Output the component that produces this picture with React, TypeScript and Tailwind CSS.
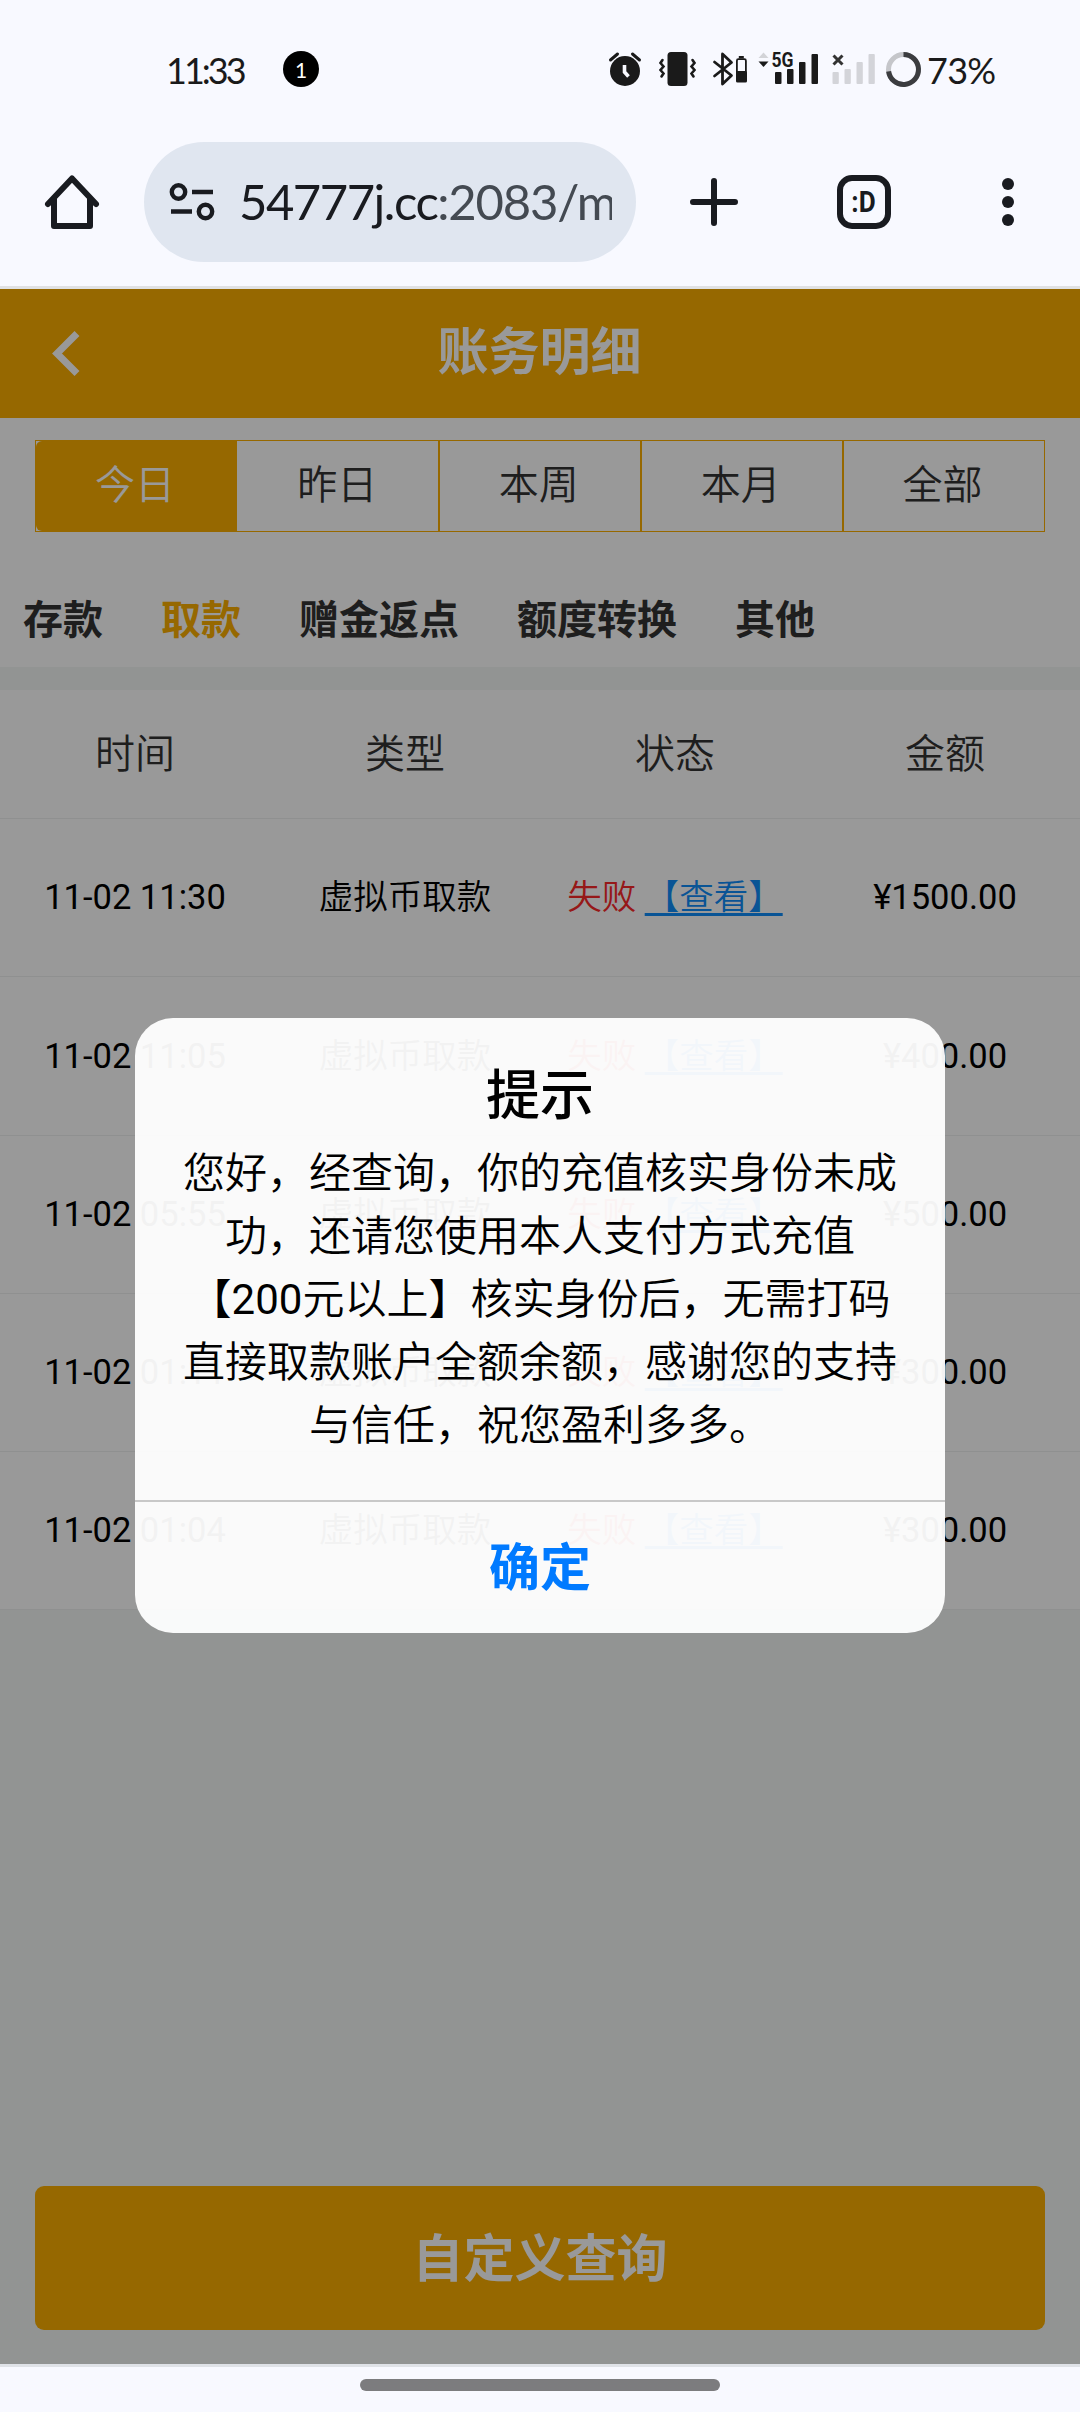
import type { ReactNode } from "react";

const ranges = ["今日", "昨日", "本周", "本月", "全部"];
const categories = ["存款", "取款", "赠金返点", "额度转换", "其他"];
const columns = ["时间", "类型", "状态", "金额"];

const records = [
    { time: "11-02 11:30", amount: "¥1500.00" },
    { time: "11-02 11:05", amount: "¥400.00" },
    { time: "11-02 05:55", amount: "¥500.00" },
    { time: "11-02 01:11", amount: "¥300.00" },
    { time: "11-02 01:04", amount: "¥300.00" },
];

function StatusBar() {
    return (
        <div className="flex h-[102px] shrink-0 items-start pt-[50px] text-[#1a1a1a] font-['Lato','Roboto',sans-serif]">
            <span className="ml-[166px] w-[117px] text-[36px] leading-[40px] tracking-[-3px]">11:33</span>
            <span className="mt-px flex h-9 w-9 items-center justify-center rounded-full bg-black text-[21px] leading-none text-white">1</span>

            {/* Alarm */}
            <svg className="ml-[288px]" width="36" height="40" viewBox="607 50 36 40" fill="none">
                <circle cx="625" cy="71" r="15" fill="#1a1a1a" />
                <path d="M610.500 60l7-6M639.500 60l-7-6" stroke="#1a1a1a" strokeWidth="3" strokeLinecap="round" />
                <path d="M624.500 65v7l4 4.500" stroke="#f8f9ff" strokeWidth="3.600" />
            </svg>
            {/* Vibrate */}
            <svg className="ml-[14px]" width="40" height="40" viewBox="657 50 40 40" fill="none">
                <rect x="667.500" y="52" width="20" height="34" rx="3.500" fill="#1a1a1a" />
                <path d="M662.500 60l-2 3 3 3.500-3 3.500 3 3.500-2 3M692.500 60l2 3-3 3.500 3 3.500-3 3.500 2 3" stroke="#1a1a1a" strokeWidth="2.600" strokeLinecap="round" />
            </svg>
            {/* Bluetooth with battery level */}
            <svg className="ml-[14px]" width="38" height="40" viewBox="711 50 38 40" fill="none">
                <path d="M714.500 62l17 13.500-9 8.500V54l9 8.500-17 13.500" stroke="#1a1a1a" strokeWidth="2.800" strokeLinejoin="round" strokeLinecap="round" />
                <rect x="736.900" y="59.200" width="9" height="22" rx="1.500" stroke="#1a1a1a" strokeWidth="1.800" />
                <rect x="736" y="71" width="11" height="11.500" rx="1.500" fill="#1a1a1a" />
                <rect x="738.800" y="56" width="5" height="2.500" fill="#1a1a1a" />
            </svg>
            {/* 5G signal */}
            <svg className="-mt-2 ml-2" width="64" height="48" viewBox="757 42 64 48">
                <path d="M763.500 52.500l5 5.500h-10z" fill="#d3d4d8" />
                <path d="M763.500 67l5-5.500h-10z" fill="#1a1a1a" />
                <g fill="#1a1a1a">
                    <rect x="775" y="72" width="6.500" height="12" rx="1" />
                    <rect x="787" y="69" width="6.500" height="15" rx="1" />
                    <rect x="799" y="62" width="6.500" height="22" rx="1" />
                    <rect x="811.500" y="54" width="6.500" height="30" rx="1" />
                    <text x="771.500" y="67" fontSize="20" fontWeight="700" fontFamily="Roboto, sans-serif" textLength="22" lengthAdjust="spacingAndGlyphs">5G</text>
                </g>
            </svg>
            {/* Second SIM, no service */}
            <svg className="ml-[10px]" width="46" height="40" viewBox="831 50 46 40">
                <path d="M833.500 55.500l9 9M842.500 55.500l-9 9" stroke="#333" strokeWidth="3" />
                <g fill="#d3d4d9">
                    <rect x="832.500" y="72" width="6.300" height="12" rx="1" />
                    <rect x="844.500" y="69" width="6.300" height="15" rx="1" />
                    <rect x="856.500" y="62" width="6.300" height="22" rx="1" />
                    <rect x="868.500" y="54" width="6.300" height="30" rx="1" />
                </g>
            </svg>
            {/* Battery ring */}
            <svg className="ml-2" width="38" height="40" viewBox="885 50 38 40" fill="none" strokeWidth="5">
                <circle cx="903.500" cy="69.500" r="15" stroke="#c5c6ca" />
                <path d="M903.500 54.500a15 15 0 1 1-14.880 16.900" stroke="#3b3c3f" />
            </svg>
            <span className="ml-1 text-[36px] leading-[40px] tracking-[-0.7px]">73%</span>
        </div>
    );
}

function BrowserBar() {
    return (
        <div className="flex h-[187px] shrink-0 items-start border-b-[3px] border-[#e0e1e3] pt-10 text-[#191b20]">
            <svg className="ml-[42px] mt-[30px]" width="60" height="60" viewBox="42 172 60 60" fill="none">
                <path d="M48 204L72 178.500L96 204" stroke="currentColor" strokeWidth="6" strokeLinecap="round" strokeLinejoin="round" />
                <path d="M54 198V226H90V198" stroke="currentColor" strokeWidth="6" strokeLinejoin="round" />
            </svg>
            <div className="ml-[42px] flex h-[120px] w-[492px] items-center rounded-full bg-[#e0e6f0] pl-[24px] font-['Lato','Roboto',sans-serif]">
                <svg width="50" height="44" viewBox="168 180 50 44" fill="none" stroke="currentColor" strokeWidth="4.400">
                    <circle cx="178.500" cy="192" r="6.700" />
                    <path d="M192 192h21M171 211.500h21" />
                    <circle cx="205.500" cy="211.500" r="6.700" />
                </svg>
                <div className="-mt-0.5 ml-[21px] w-[373px] overflow-hidden whitespace-nowrap text-[49px] leading-[70px] tracking-[-1.5px]">
                    54777j.cc<span className="tracking-[-1.200px] text-[#444a52]">:2083/m</span>
                </div>
            </div>
            <svg className="ml-[52px] mt-[34px]" width="52" height="52" viewBox="688 176 52 52">
                <path d="M714 181v42M693 202h42" stroke="currentColor" strokeWidth="6" strokeLinecap="round" />
            </svg>
            <div className="ml-[97px] mt-[33px] flex h-[54px] w-[54px] items-center justify-center rounded-[15px] border-[6px] border-[#191b20] text-[29px] font-bold leading-none font-['Roboto',sans-serif]">
                <span className="inline-block scale-x-[.9]">:D</span>
            </div>
            <div className="ml-[111px] mt-9 flex flex-col gap-1.5">
                <i className="h-3 w-3 rounded-full bg-[#191b20]" />
                <i className="h-3 w-3 rounded-full bg-[#191b20]" />
                <i className="h-3 w-3 rounded-full bg-[#191b20]" />
            </div>
        </div>
    );
}

function Cell({ children }: { children: ReactNode }) {
    return <div className="flex w-1/4 items-center justify-center whitespace-pre">{children}</div>;
}

function Ledger() {
    return (
        <>
            <header className="flex h-[129px] items-center bg-[#faad00] text-white">
                <svg className="ml-[50px] w-[32px]" width="32" height="50" viewBox="0 0 32 50" fill="none">
                    <path d="M27 4.500L7 24.500L27 44.500" stroke="currentColor" strokeWidth="7" />
                </svg>
                <h1 className="flex-1 pr-[83px] text-center text-[51px] font-bold">账务明细</h1>
            </header>

            <div className="bg-white pt-[22px]">
                <div className="mx-[35px] flex h-[92px] border border-[#faad00] text-[40px] font-[350] text-[#333]">
                    {ranges.map((label, i) => (
                        <div
                            key={label}
                            className={
                                i === 0
                                    ? "flex w-[201.200px] items-center justify-center rounded-l-[6px] bg-[#faad00] pr-[3px] text-white"
                                    : i === 1
                                        ? "flex w-[201.200px] items-center justify-center pr-px"
                                        : "flex flex-1 items-center justify-center border-l-2 border-[#faad00] pr-[3px]"
                            }
                        >
                            {label}
                        </div>
                    ))}
                </div>
                <div className="flex h-[135px] gap-[58px] pl-[23px] pt-[60px] text-[40px] font-bold leading-[58px] text-[#333]">
                    {categories.map((label, i) => (
                        <span key={label} className={i === 1 ? "text-[#faad00]" : ""}>
                            {label}
                        </span>
                    ))}
                </div>
            </div>

            <div className="mt-[23px] bg-white">
                <div className="flex h-[129px] border-b border-[#eff1f0] pt-[2px] text-[40px] font-[350] text-[#333]">
                    {columns.map((label) => (
                        <Cell key={label}>{label}</Cell>
                    ))}
                </div>
                {records.map((row) => (
                    <div key={row.time} className="flex h-[158.300px] border-b border-[#eff1f0] pt-px text-[34.500px] text-black">
                        <Cell>{row.time}</Cell>
                        <Cell><span className="font-[350]">虚拟币取款</span></Cell>
                        <Cell>
                            <span className="font-[350] text-[#fa2828]">失败 </span>
                            <a className="font-[350] text-[#108cf8] underline decoration-[3px] underline-offset-[4px] [text-decoration-skip-ink:none]">【查看】</a>
                        </Cell>
                        <Cell>{row.amount}</Cell>
                    </div>
                ))}
            </div>

            <button className="mx-[35px] mb-[34px] mt-auto h-[144px] rounded-[9px] bg-[#faad00] pt-[4px] text-[51px] font-bold text-white">
                自定义查询
            </button>
        </>
    );
}

function NoticeDialog() {
    return (
        <div className="absolute inset-0 flex justify-center bg-black/40">
            <div className="mt-[729px] flex h-[615px] w-[810px] flex-col rounded-[38px] bg-white/95 text-center text-black">
                <div className="h-[484px] border-b-2 border-black/20 px-[45px] pt-[46px]">
                    <h2 className="text-[54px] font-medium leading-[66px]">提示</h2>
                    <p className="mt-[12px] text-[42px] font-[350] leading-[63px]">
                        您好，经查询，你的充值核实身份未成功，还请您使用本人支付方式充值【<span className="font-normal">200</span>元以上】核实身份后，无需打码直接取款账户全额余额，感谢您的支持与信任，祝您盈利多多。
                    </p>
                </div>
                <button className="flex-1 pt-[3px] text-[51px] font-bold text-[#007aff]">确定</button>
            </div>
        </div>
    );
}

export default function App() {
    return (
        <div lang="zh-CN" className="flex h-[2412px] w-[1080px] flex-col overflow-hidden bg-[#f8f9ff] font-['Roboto','Noto_Sans_CJK_SC',sans-serif]">
            <StatusBar />
            <BrowserBar />
            <main className="relative flex h-[2075px] shrink-0 flex-col bg-[#f3f7f5]">
                <Ledger />
                <NoticeDialog />
            </main>
            <div className="flex flex-1 justify-center border-t-[3px] border-[#dfe2e7] pt-3">
                <div className="h-3 w-[360px] rounded-full bg-[#7c7c7e]" />
            </div>
        </div>
    );
}
